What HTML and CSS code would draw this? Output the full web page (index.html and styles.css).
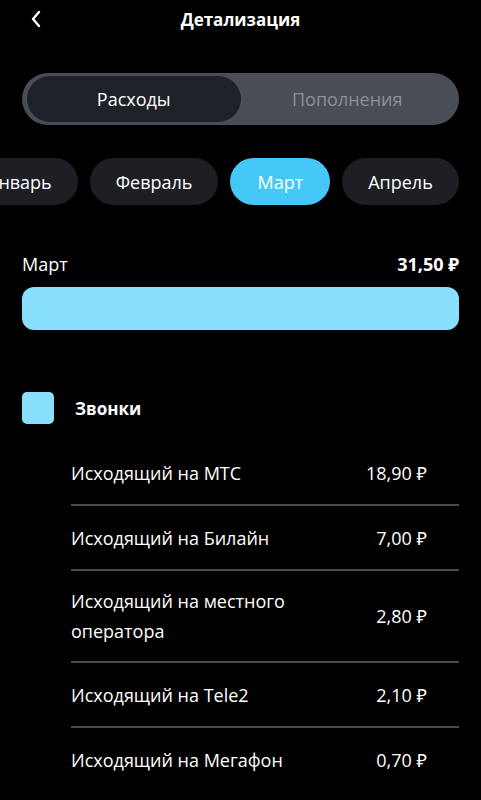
FILE: index.html
```html
<!DOCTYPE html>
<html lang="ru">
<head>
    <meta charset="UTF-8">
    <meta name="viewport" content="width=device-width, initial-scale=1.0">
    <title>Детализация</title>
    <link rel="stylesheet" href="styles.css">
</head>
<body>
    <div class="header">
        <button class="back" aria-label="Назад">
            <svg width="12" height="18" viewBox="0 0 12 18"><path d="M9 2 L3 9 L9 16" fill="none" stroke="#fff" stroke-width="2.4" stroke-linecap="round" stroke-linejoin="round"/></svg>
        </button>
        <h1>Детализация</h1>
    </div>

    <div class="tabs">
        <div class="tab active">Расходы</div>
        <div class="tab">Пополнения</div>
    </div>

    <div class="months">
        <div class="months-track">
            <div class="chip">Январь</div>
            <div class="chip">Февраль</div>
            <div class="chip selected">Март</div>
            <div class="chip">Апрель</div>
        </div>
    </div>

    <div class="total">
        <span>Март</span>
        <span class="total-sum">31,50 ₽</span>
    </div>
    <div class="bar"></div>

    <div class="legend">
        <div class="swatch"></div>
        <span>Звонки</span>
    </div>

    <div class="list">
        <div class="row"><span class="name">Исходящий на МТС</span><span class="sum">18,90 ₽</span></div>
        <div class="row"><span class="name">Исходящий на Билайн</span><span class="sum">7,00 ₽</span></div>
        <div class="row"><span class="name">Исходящий на местного оператора</span><span class="sum">2,80 ₽</span></div>
        <div class="row"><span class="name">Исходящий на Tele2</span><span class="sum">2,10 ₽</span></div>
        <div class="row"><span class="name">Исходящий на Мегафон</span><span class="sum">0,70 ₽</span></div>
    </div>
</body>
</html>
```

FILE: styles.css
```css
body {
    margin: 0;
    padding: 0 22px;
    background-color: #000;
    color: #fff;
    font-family: "Open Sans", "Noto Sans", sans-serif;
    font-size: 18px;
    overflow: hidden;
}
.header {
    position: relative;
    height: 38px;
    display: flex;
    align-items: center;
    justify-content: center;
}
.header h1 {
    margin: 0;
    font-size: 17px;
    font-weight: 700;
}
.back {
    position: absolute;
    left: 8px;
    top: 10px;
    padding: 0;
    border: none;
    background: none;
    display: flex;
}
.tabs {
    margin-top: 35px;
    display: flex;
    padding: 3px 5px;
    height: 46px;
    background-color: #4a4d55;
    border-radius: 26px;
}
.tab {
    flex: 1;
    display: flex;
    align-items: center;
    justify-content: center;
    border-radius: 23px;
    color: #8d9097;
}
.tab.active {
    background-color: #1f2129;
    color: #fff;
}
.months {
    margin: 33px -22px 0;
    overflow: hidden;
}
.months-track {
    display: flex;
    gap: 12px;
    margin-left: -39px;
}
.chip {
    flex: none;
    height: 47px;
    padding: 0 26px;
    display: flex;
    align-items: center;
    border-radius: 24px;
    background-color: #1e1f25;
}
.chip.selected {
    padding: 0 27px;
    background-color: #45c8f8;
}
.total {
    margin-top: 46px;
    display: flex;
    justify-content: space-between;
    align-items: center;
    height: 26px;
}
.total-sum {
    font-weight: 700;
}
.bar {
    margin-top: 10px;
    height: 43px;
    border-radius: 12px;
    background-color: #88e0fe;
}
.legend {
    margin-top: 62px;
    display: flex;
    align-items: center;
    gap: 21px;
    font-size: 17px;
    font-weight: 700;
}
.swatch {
    width: 32px;
    height: 32px;
    border-radius: 5px;
    background-color: #88e0fe;
}
.list {
    margin-top: 17px;
    margin-left: 49px;
}
.row {
    display: flex;
    align-items: center;
    justify-content: space-between;
    min-height: 33px;
    padding: 15px 32px 15px 0;
    line-height: 30px;
    border-bottom: 2px solid #4a4a4c;
}
.row:last-child {
    border-bottom: none;
}
.name {
    max-width: 240px;
}
```
